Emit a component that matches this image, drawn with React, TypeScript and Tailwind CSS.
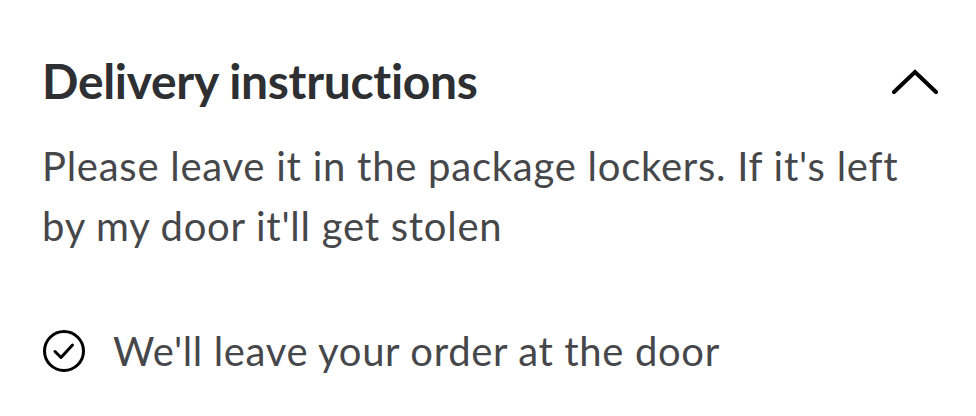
export default function App() {
  return (
    <div className="w-[976px] h-[416px] bg-white font-['Lato',sans-serif] overflow-hidden">
      <div className="pl-[42px] pr-[38px] pt-[51px]">
        {/* Header */}
        <div className="flex items-center justify-between">
          <h2 className="text-[48px] leading-[60px] font-bold text-[#2e2f32] tracking-[-0.3px]">
            Delivery instructions
          </h2>
          <svg
            className="w-[46px] h-[28px]"
            viewBox="0 0 46 28"
            fill="none"
            stroke="#000"
            strokeWidth={4}
            strokeLinecap="round"
            strokeLinejoin="miter"
          >
            <path d="M2 25 L23 5 L44 25" />
          </svg>
        </div>

        {/* Instructions */}
        <p className="mt-[25px] text-[40px] leading-[60px] text-[#46474a] tracking-[0.75px] pr-[30px]">
          Please leave it in the package lockers. If it's left by my door it'll get stolen
        </p>

        {/* Confirmation */}
        <div className="mt-[65px] flex items-center gap-[27px]">
          <svg className="w-[44px] h-[44px] shrink-0" viewBox="0 0 44 44" fill="none" stroke="#000" strokeWidth={3}>
            <circle cx="22" cy="22" r="19.5" />
            <path d="M13 22.5 L19 28.5 L30.5 16" strokeLinecap="round" strokeLinejoin="round" />
          </svg>
          <span className="text-[40px] leading-[60px] text-[#46474a] tracking-[0.65px]">
            We'll leave your order at the door
          </span>
        </div>
      </div>
    </div>
  );
}
